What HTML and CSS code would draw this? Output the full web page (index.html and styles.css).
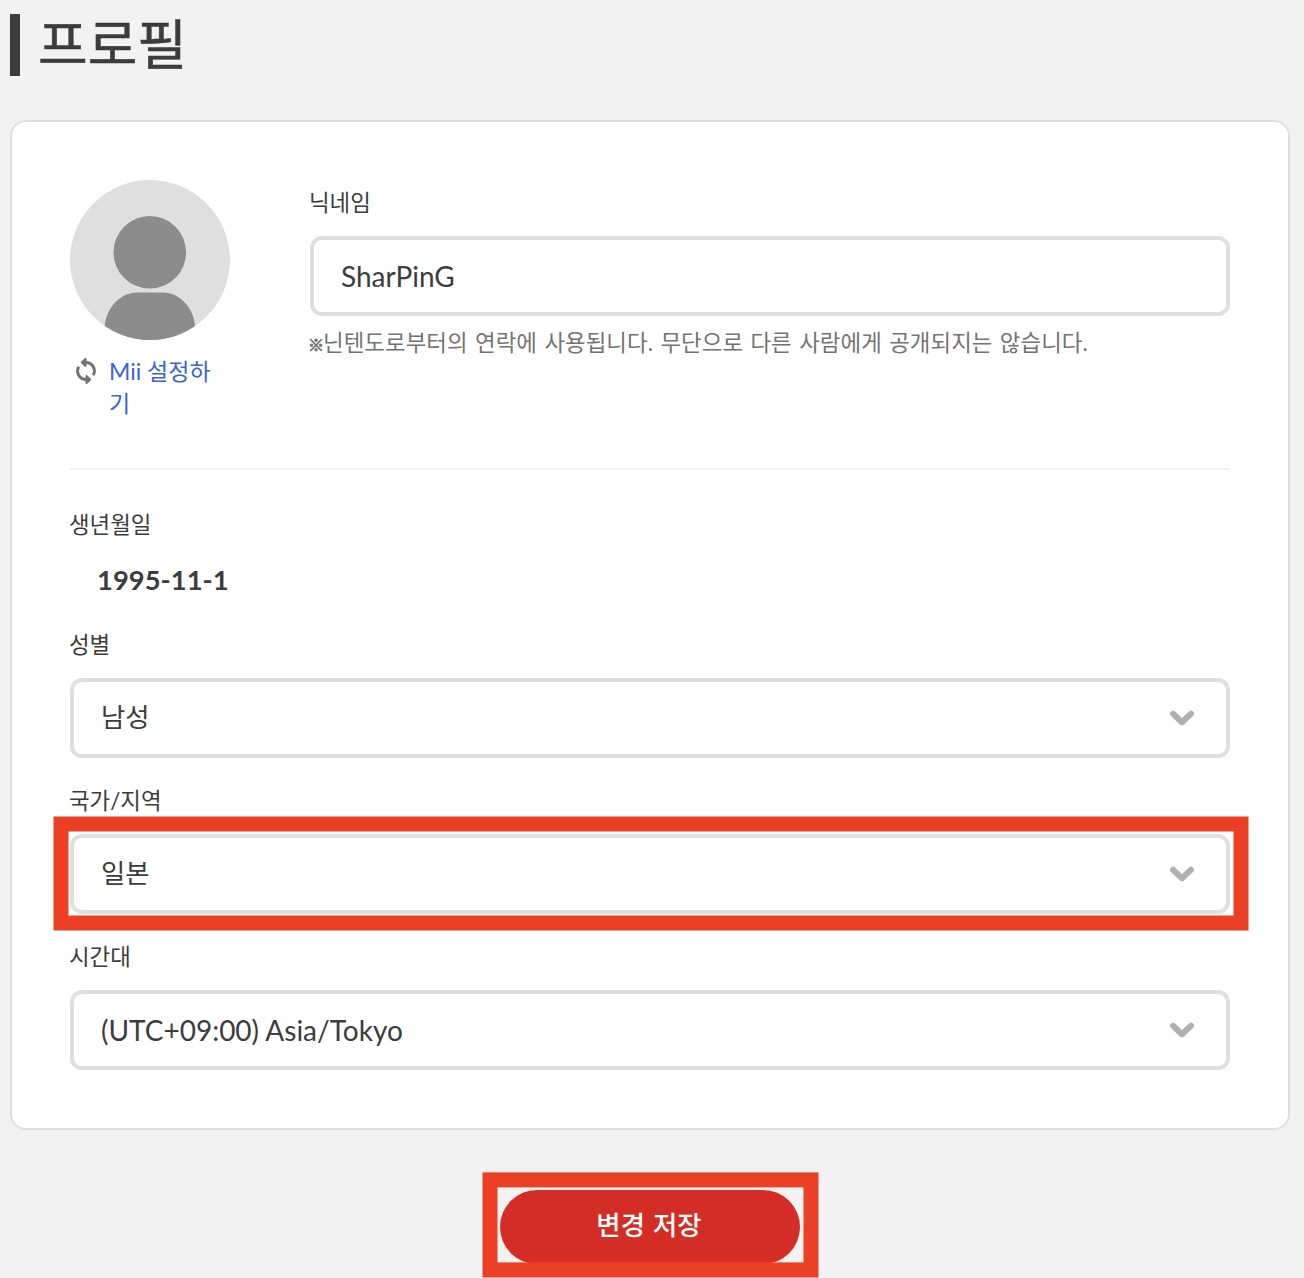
FILE: index.html
```html
<!DOCTYPE html>
<html lang="ko">
<head>
<meta charset="utf-8">
<title>프로필</title>
<link rel="stylesheet" href="styles.css">
</head>
<body>
<main class="page">
  <h1 class="title">프로필</h1>
  <section class="card">
    <div class="identity">
      <div class="mii">
        <svg class="avatar" viewBox="0 0 160 160" width="160" height="160" aria-hidden="true">
          <defs><clipPath id="round"><circle cx="80" cy="80" r="80"/></clipPath></defs>
          <g clip-path="url(#round)">
            <rect width="160" height="160" fill="#dfdfdf"/>
            <circle cx="79.8" cy="72.3" r="36.3" fill="#8c8c8c"/>
            <path d="M34.5 160V147C36 127 51 112.5 67 112.5H93C110 112.5 124 128 125 147V160Z" fill="#8c8c8c"/>
          </g>
        </svg>
        <a class="mii-link" href="#">
          <svg class="sync" viewBox="0 0 24 28" width="24" height="28" aria-hidden="true">
            <path d="M9.5 5.5H12A8.4 8.4 0 0 1 19.2 18.2M14.5 22.5H12A8.4 8.4 0 0 1 4.8 9.8" fill="none" stroke="#737373" stroke-width="3"/>
            <path d="M11.5 2V9L7.8 5.5ZM12.5 19V26L16.2 22.5Z" fill="#737373" stroke="#737373" stroke-width="2" stroke-linejoin="round"/>
          </svg>
          <span>Mii 설정하기</span>
        </a>
      </div>
      <div class="nickname">
        <label class="label" for="nick">닉네임</label>
        <input class="control" id="nick" type="text" value="SharPinG">
        <p class="hint"><span class="mark">※</span>닌텐도로부터의 연락에 사용됩니다. 무단으로 다른 사람에게 공개되지는 않습니다.</p>
      </div>
    </div>
    <div class="field birth">
      <div class="label">생년월일</div>
      <div class="value">1995-11-1</div>
    </div>
    <div class="field gender">
      <div class="label">성별</div>
      <div class="control select"><span>남성</span>
        <svg class="chevron" viewBox="0 0 26 18" width="26" height="18" aria-hidden="true"><path d="M4 4.8L13 13.2L22 4.8"/></svg>
      </div>
    </div>
    <div class="field">
      <div class="label">국가/지역</div>
      <div class="control select marked"><span>일본</span>
        <svg class="chevron" viewBox="0 0 26 18" width="26" height="18" aria-hidden="true"><path d="M4 4.8L13 13.2L22 4.8"/></svg>
      </div>
    </div>
    <div class="field">
      <div class="label">시간대</div>
      <div class="control select"><span class="zone">(UTC+09:00) Asia/Tokyo</span>
        <svg class="chevron" viewBox="0 0 26 18" width="26" height="18" aria-hidden="true"><path d="M4 4.8L13 13.2L22 4.8"/></svg>
      </div>
    </div>
  </section>
  <div class="actions"><button class="save" type="button"><span>변경 저장</span></button></div>
</main>
</body>
</html>
```

FILE: styles.css
```css
* { box-sizing: border-box; }
html { background: #f2f2f2; }
body {
  margin: 0;
  height: 1278px;
  overflow: hidden;
  background: #f2f2f2;
  color: #3c3c3c;
  font-family: Lato, "Noto Sans CJK KR", sans-serif;
  font-size: 22.4px;
}
.page { padding: 14px 14px 0 10px; }
.title {
  margin: 0 0 44px;
  height: 62px;
  padding-left: 18px;
  border-left: 10px solid #3c3c3c;
  font-size: 54px;
  font-weight: 400;
  line-height: 61px;
  -webkit-text-stroke: .5px #3c3c3c;
}
.card {
  width: 1280px;
  height: 1010px;
  padding: 58px;
  border: 2px solid #dfdfdf;
  border-radius: 16px;
  background: #fff;
}
.identity {
  display: flex;
  gap: 80px;
  height: 290px;
  border-bottom: 2px solid #f1f1f1;
}
.mii { width: 160px; }
.avatar { display: block; }
.mii-link {
  display: flex;
  gap: 11px;
  margin-top: 15px;
  padding-left: 4px;
  color: #3b62d6;
  font-size: 23px;
  line-height: 32px;
  text-decoration: none;
}
.mii-link span { width: 112px; word-break: break-all; }
.sync { flex: none; margin-top: 2px; }
.nickname { flex: 1; padding-top: 7px; }
.label {
  display: block;
  margin: 0 0 17px -1px;
  line-height: 32px;
}
.control {
  display: block;
  width: 100%;
  height: 80px;
  padding: 0 27px;
  border: 4px solid #dfdfdf;
  border-radius: 12px;
  background: #fff;
  color: #3c3c3c;
  font-family: inherit;
  font-size: 28px;
}
.hint {
  margin: 11px 0 0 -2px;
  color: #737373;
  line-height: 32px;
  white-space: nowrap;
  word-spacing: 1.6px;
  letter-spacing: .06px;
}
.mark { display: inline-block; width: 15px; font-size: 16px; -webkit-text-stroke: .8px #737373; }
.field { padding-top: 27px; }
.birth { padding-top: 39px; }
.value {
  margin: -3px 0 0 27px;
  font-size: 27.4px;
  font-weight: 700;
  line-height: 50px;
}
.gender { padding-top: 24px; }
.select {
  display: flex;
  align-items: center;
  justify-content: space-between;
  padding-right: 31px;
  font-size: 26.4px;
}
.select span { padding-bottom: 5px; }
.select .zone { padding-bottom: 0; font-size: 28px; }
.chevron { fill: none; stroke: #b0b0b0; stroke-width: 6; stroke-linecap: round; stroke-linejoin: round; }
.marked { position: relative; }
.marked::after {
  content: "";
  position: absolute;
  inset: -22px -22px -20px -21px;
  border: 15px solid #eb4025;
  transform: translate(.5px, .5px);
}
.actions { display: flex; justify-content: center; width: 1280px; padding-top: 60px; }
.save {
  position: relative;
  width: 300px;
  height: 74px;
  padding: 0 2px 0 0;
  border: 0;
  border-radius: 37px;
  background: #d42d26;
  color: #fff;
  font: 500 26.4px/71px Lato, "Noto Sans CJK KR", sans-serif;
  word-spacing: 1.5px;
}
.save span { display: block; height: 74px; }
.save::after {
  content: "";
  position: absolute;
  inset: -18px -18px -13px -18px;
  border: 15px solid #eb4025;
  transform: translate(.5px, .4px);
}
```
